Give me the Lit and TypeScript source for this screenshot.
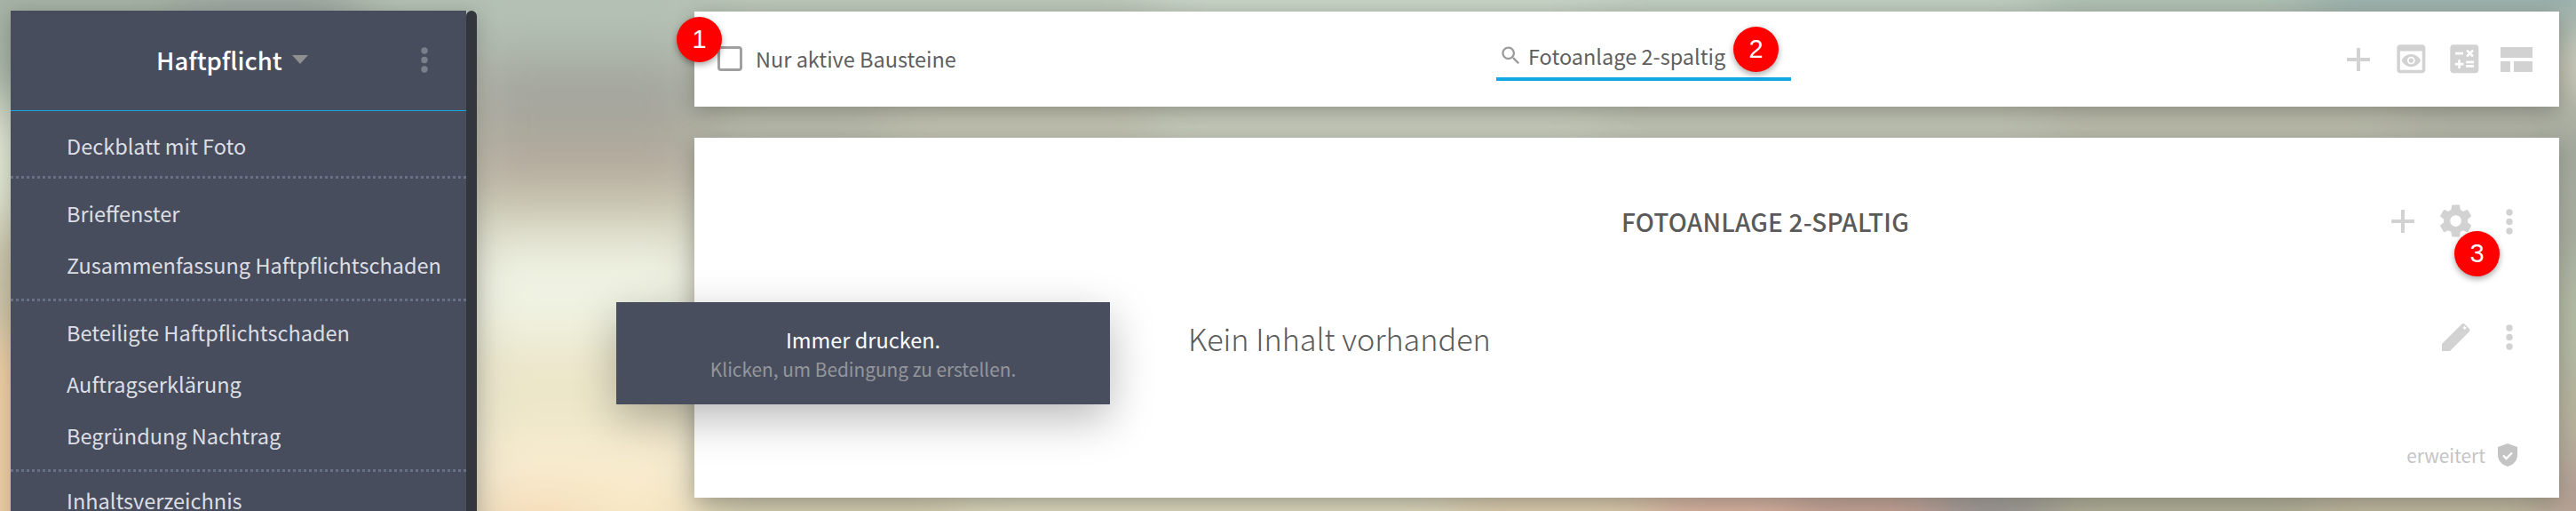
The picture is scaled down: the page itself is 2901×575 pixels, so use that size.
import { LitElement, html, css, svg } from "lit";
import { customElement } from "lit/decorators.js";

// Colour patches of the blurred photo behind the page: x, y, w, h, colour.
const PATCHES: [number, number, number, number, string][] = [
  [-100, -100, 300, 220, "#a6b3a5"],
  [-100, 120, 300, 130, "#dfe5d2"],
  [-100, 250, 300, 130, "#c9c3a8"],
  [-100, 380, 300, 300, "#efcfa4"],
  [200, -100, 200, 220, "#a0a8a2"],
  [400, -100, 400, 160, "#b4c1b4"],
  [530, 60, 260, 90, "#a4a69e"],
  [530, 150, 260, 70, "#b3aa9c"],
  [530, 220, 260, 50, "#d3d0bb"],
  [530, 270, 260, 110, "#f0f3e3"],
  [530, 380, 260, 110, "#ece6c9"],
  [530, 490, 260, 70, "#f9ecd0"],
  [530, 560, 140, 100, "#f3d9b3"],
  [670, 560, 130, 100, "#f7e6c0"],
  [800, -100, 500, 130, "#b7c6b8"],
  [1300, -100, 500, 130, "#c6d6c8"],
  [1800, -100, 500, 130, "#bccdc0"],
  [2300, -100, 300, 130, "#a9bdb1"],
  [2600, -100, 400, 130, "#94aeaa"],
  [780, 120, 220, 40, "#a9ae9e"],
  [1000, 120, 300, 40, "#bcbea9"],
  [1300, 120, 500, 40, "#c3cfbf"],
  [1800, 120, 500, 40, "#b8c0ae"],
  [2300, 120, 400, 40, "#adb09e"],
  [2700, 120, 300, 40, "#9ea297"],
  [2880, 130, 120, 170, "#9ba598"],
  [2880, 300, 120, 120, "#acb79f"],
  [2880, 420, 120, 90, "#b3ad93"],
  [2880, 510, 120, 150, "#b29690"],
  [780, 555, 300, 100, "#d6cdab"],
  [1080, 555, 560, 100, "#e2ddbe"],
  [1640, 555, 220, 100, "#e2cda9"],
  [1860, 555, 160, 100, "#dfab98"],
  [2020, 555, 160, 100, "#c4968a"],
  [2180, 555, 130, 100, "#938b8c"],
  [2310, 555, 300, 100, "#aca98d"],
  [2610, 555, 270, 100, "#bdb296"],
];

const ICONS = {
  preview:
    "M19 3H5c-1.11 0-2 .9-2 2v14c0 1.1.89 2 2 2h14c1.1 0 2-.9 2-2V5c0-1.1-.89-2-2-2zm0 16H5V7h14v12zm-5.5-6c0 .83-.67 1.5-1.5 1.5s-1.5-.67-1.5-1.5.67-1.5 1.5-1.5 1.5.67 1.5 1.5zM12 9c-2.73 0-5.06 1.66-6 4 .94 2.34 3.27 4 6 4s5.06-1.66 6-4c-.94-2.34-3.27-4-6-4zm0 6.5c-1.38 0-2.5-1.12-2.5-2.5s1.12-2.5 2.5-2.5 2.5 1.12 2.5 2.5-1.12 2.5-2.5 2.5z",
  calc:
    "M19 3H5c-1.1 0-2 .9-2 2v14c0 1.1.9 2 2 2h14c1.1 0 2-.9 2-2V5c0-1.1-.9-2-2-2zm-5.97 4.06L14.09 6l1.41 1.41L16.91 6l1.06 1.06-1.41 1.41 1.41 1.41-1.06 1.06-1.41-1.4-1.41 1.41-1.06-1.06 1.41-1.41-1.41-1.42zm-6.78.66h5v1.5h-5v-1.5zM11.5 16h-2v2H8v-2H6v-1.5h2v-2h1.5v2h2V16zm6.5 1.25h-5v-1.5h5v1.5zm0-2.5h-5v-1.5h5v1.5z",
  gear:
    "M19.43 12.98c.04-.32.07-.64.07-.98s-.03-.66-.07-.98l2.11-1.65c.19-.15.24-.42.12-.64l-2-3.46c-.12-.22-.39-.3-.61-.22l-2.49 1c-.52-.4-1.08-.73-1.69-.98l-.38-2.65C14.46 2.18 14.25 2 14 2h-4c-.25 0-.46.18-.49.42l-.38 2.65c-.61.25-1.17.59-1.69.98l-2.49-1c-.23-.09-.49 0-.61.22l-2 3.46c-.13.22-.07.49.12.64l2.11 1.65c-.04.32-.07.65-.07.98s.03.66.07.98l-2.11 1.65c-.19.15-.24.42-.12.64l2 3.46c.12.22.39.3.61.22l2.49-1c.52.4 1.08.73 1.69.98l.38 2.65c.03.24.24.42.49.42h4c.25 0 .46-.18.49-.42l.38-2.65c.61-.25 1.17-.59 1.69-.98l2.49 1c.23.09.49 0 .61-.22l2-3.46c.12-.22.07-.49-.12-.64l-2.11-1.65zM12 15.5c-1.93 0-3.5-1.57-3.5-3.5s1.57-3.5 3.5-3.5 3.5 1.57 3.5 3.5-1.57 3.5-3.5 3.5z",
  search:
    "M15.5 14h-.79l-.28-.27C15.41 12.59 16 11.11 16 9.5 16 5.91 13.09 3 9.5 3S3 5.91 3 9.5 5.91 16 9.5 16c1.61 0 3.09-.59 4.23-1.57l.27.28v.79l5 4.99L20.49 19l-4.99-5zm-6 0C7.01 14 5 11.99 5 9.5S7.01 5 9.5 5 14 7.01 14 9.5 11.99 14 9.5 14z",
};

const plus = () => html`<svg class="plus" width="26" height="26" viewBox="0 0 26 26"><path d="M11 0h4v11h11v4H15v11h-4V15H0v-4h11z" /></svg>`;
const kebab = () => html`<svg class="kebab" width="8" height="29" viewBox="0 0 8 29"><circle cx="4" cy="4" r="3.7" /><circle cx="4" cy="14.5" r="3.7" /><circle cx="4" cy="25" r="3.7" /></svg>`;

@customElement("app-root")
export class AppRoot extends LitElement {
  static styles = css`
    :host { display: block; font-family: "Noto Sans CJK SC", "Noto Sans", sans-serif; }
    * { box-sizing: border-box; }
    .page { position: relative; display: flex; height: 575px; overflow: hidden; background: #c8c8b8; }
    .backdrop { position: absolute; inset: 0; width: 100%; height: 100%; }

    .sidebar { position: relative; display: flex; width: 525px; height: 700px; margin: 12px 0 0 12px; flex: none; box-shadow: 0 4px 24px rgba(0,0,0,.22); }
    .panel { width: 513px; background: #474d5d; color: #dcdee3; font-size: 23.5px; }
    .track { width: 12px; background: #33363d; border-radius: 6px 6px 0 0; }
    .head { display: flex; align-items: center; height: 113px; padding: 0 0 2px 164px; border-bottom: 1px solid #14a7e6; }
    .head-title { font-size: 27.5px; font-weight: 500; color: #fff; line-height: 40px; }
    .caret { margin-left: 11px; width: 0; height: 0; border-left: 9px solid transparent; border-right: 9px solid transparent; border-top: 10px solid #8f8f8f; }
    .head .kebab { margin-left: 127px; fill: #7b7f8a; }
    .group { padding: 10px 0 12px; background: repeating-linear-gradient(90deg, #687085 0 3px, transparent 3px 6px) left bottom / 100% 3px no-repeat; }
    .group.g1 { padding: 10px 0 8px; }
    .group.g3 { padding: 6px 0 12px; }
    .group.g4 { padding: 3px 0; background: none; }
    .item { height: 58px; line-height: 58px; padding-left: 63px; white-space: nowrap; }

    .content { position: relative; width: 2100px; margin-left: 245px; padding-top: 13px; flex: none; display: flex; flex-direction: column; gap: 35px; }
    .card { background: #fff; box-shadow: 0 6px 24px rgba(0,0,0,.28); }
    .toolbar { display: grid; grid-template-columns: 903px 332px 1fr; align-items: center; height: 107px; color: #5f5f5f; font-size: 23.5px; }
    .filter { display: flex; align-items: center; gap: 15px; padding: 0 0 2px 26px; }
    .check { width: 28px; height: 28px; border: 3px solid #a0a0a0; border-radius: 4px; background: #fff; flex: none; }
    .search { display: flex; align-items: center; gap: 6px; height: 50px; border-bottom: 4px solid #14a7e6; padding: 0 0 2px 3px; position: relative; top: -1px; }
    .search svg { fill: #9a9a9a; flex: none; }
    .tools { display: flex; align-items: center; justify-content: flex-end; gap: 28px; padding-right: 30px; }
    svg.plus, .tools svg, .actions svg { fill: #d2d2d2; flex: none; }
    .tools svg.plus { margin-right: 2px; }
    .tools svg.layout { margin-left: -3px; }
    .tools svg.glyph { margin: 0 -5.33px; }

    .main { position: relative; display: flex; flex-direction: column; height: 405px; color: #5a5a5a; }
    .row { display: flex; align-items: center; }
    .row.title-row { height: 188px; }
    .title { flex: 1; padding-left: 518px; text-align: center; font-size: 28px; font-weight: 500; line-height: 40px; letter-spacing: .2px; }
    .actions { display: flex; align-items: center; padding-right: 26px; }
    .act { width: 60px; display: flex; justify-content: center; align-items: center; }
    .row.body-row { height: 72px; }
    .empty { flex: 1; padding: 2px 0 0 556px; font-size: 34.2px; font-weight: 300; line-height: 50px; }
    .foot { display: flex; align-items: center; justify-content: flex-end; gap: 14px; margin-top: auto; padding: 0 47px 35px 0; color: #c4c4c4; font-size: 20.8px; line-height: 26px; }
    .foot svg { flex: none; }

    .tip { position: absolute; left: 694px; top: 340px; width: 556px; height: 115px; display: flex; flex-direction: column; align-items: center; justify-content: center; gap: 2px; background: #484e5e; box-shadow: 0 16px 50px rgba(0,0,0,.28); text-align: center; }
    .tip-a { color: #fff; font-size: 23.5px; line-height: 32px; }
    .tip-b { color: #94969c; font-size: 20.8px; line-height: 30px; }

    .badge { position: absolute; width: 51px; height: 51px; border-radius: 50%; background: #f00; color: #fff; display: flex; align-items: center; justify-content: center; font-family: "Liberation Sans", sans-serif; font-size: 29px; line-height: 1; box-shadow: 0 3px 7px rgba(0,0,0,.35); }
    .b1 { left: 762px; top: 19px; }
    .b2 { left: 1952px; top: 30px; }
    .b3 { left: 2764px; top: 260px; }
  `;

  render() {
    return html`
      <div class="page">
        <svg class="backdrop" viewBox="0 0 2901 575" preserveAspectRatio="none">
          <defs><filter id="soft" x="-10%" y="-30%" width="120%" height="160%"><feGaussianBlur stdDeviation="30" /></filter></defs>
          <g filter="url(#soft)">
            ${PATCHES.map(([x, y, w, h, c]) => svg`<rect x=${x} y=${y} width=${w} height=${h} fill=${c} />`)}
          </g>
        </svg>

        <nav class="sidebar">
          <div class="panel">
            <div class="head">
              <span class="head-title">Haftpflicht</span>
              <span class="caret"></span>
              ${kebab()}
            </div>
            <div class="group g1"><div class="item">Deckblatt mit Foto</div></div>
            <div class="group g2">
              <div class="item">Brieffenster</div>
              <div class="item">Zusammenfassung Haftpflichtschaden</div>
            </div>
            <div class="group g3">
              <div class="item">Beteiligte Haftpflichtschaden</div>
              <div class="item">Auftragserklärung</div>
              <div class="item">Begründung Nachtrag</div>
            </div>
            <div class="group g4"><div class="item">Inhaltsverzeichnis</div></div>
          </div>
          <div class="track"></div>
        </nav>

        <div class="content">
          <section class="card toolbar">
            <label class="filter"><span class="check"></span><span>Nur aktive Bausteine</span></label>
            <div class="search">
              <svg width="27" height="27" viewBox="0 0 24 24"><path d=${ICONS.search} /></svg>
              <span>Fotoanlage 2-spaltig</span>
            </div>
            <div class="tools">
              ${plus()}
              <svg class="glyph" width="42.67" height="42.67" viewBox="0 0 24 24"><path d=${ICONS.preview} /></svg>
              <svg class="glyph" width="42.67" height="42.67" viewBox="0 0 24 24"><path d=${ICONS.calc} /></svg>
              <svg class="layout" width="36" height="28" viewBox="0 0 36 28"><path d="M0 0h36v12H0zM0 16h11v12H0zM15 16h21v12H15z" /></svg>
            </div>
          </section>

          <section class="card main">
            <div class="row title-row">
              <div class="title">FOTOANLAGE 2-SPALTIG</div>
              <div class="actions">
                <div class="act">${plus()}</div>
                <div class="act"><svg width="43.2" height="43.2" viewBox="0 0 24 24"><path d=${ICONS.gear} /></svg></div>
                <div class="act">${kebab()}</div>
              </div>
            </div>
            <div class="row body-row">
              <div class="empty">Kein Inhalt vorhanden</div>
              <div class="actions">
                <div class="act"><svg width="32" height="32" viewBox="0 0 32 32"><path fill-rule="evenodd" d="M0 24 22 2q2-2 4 0l4.500 4.500q2 2 0 4L9 32H0zM25.500 3.800 23.500 5.800l2.200 2.200 2-2z" /></svg></div>
                <div class="act">${kebab()}</div>
              </div>
            </div>
            <div class="foot">
              <span>erweitert</span>
              <svg width="22" height="26" viewBox="0 0 22 26"><path fill="#c4c4c4" d="M11 0 22 4v9c0 6.500-4.500 10.800-11 13C4.500 23.800 0 19.500 0 13V4z" /><path d="M6 13.500l3.500 3.500 6.500-6.500" fill="none" stroke="#fff" stroke-width="2.400" /></svg>
            </div>
          </section>
        </div>

        <div class="tip">
          <div class="tip-a">Immer drucken.</div>
          <div class="tip-b">Klicken, um Bedingung zu erstellen.</div>
        </div>

        <div class="badge b1">1</div>
        <div class="badge b2">2</div>
        <div class="badge b3">3</div>
      </div>
    `;
  }
}
